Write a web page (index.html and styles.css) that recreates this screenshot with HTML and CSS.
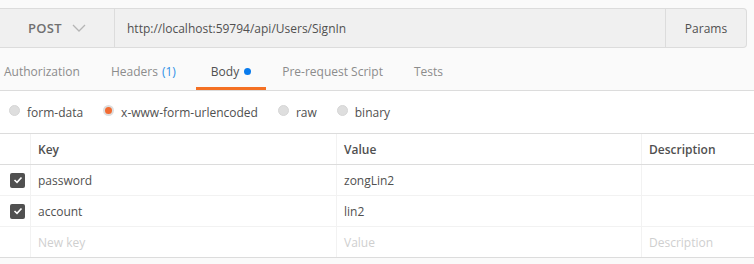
FILE: index.html
```html
<!DOCTYPE html>
<html>
<head>
<meta charset="utf-8">
<link rel="stylesheet" href="styles.css">
</head>
<body>
<div class="urlbar">
  <div class="method">
    <span class="method-name">POST</span>
    <svg class="chev" width="14" height="8" viewBox="0 0 14 8"><path d="M1 1 L7 7 L13 1" fill="none" stroke="#b5b5b5" stroke-width="1.3"/></svg>
  </div>
  <div class="url">http://localhost:59794/api/Users/SignIn</div>
  <div class="params">Params</div>
</div>
<div class="tabs">
  <div class="tab">Authorization</div>
  <div class="tab">Headers <span class="count">(1)</span></div>
  <div class="tab active">Body <span class="dot"></span></div>
  <div class="tab">Pre-request Script</div>
  <div class="tab">Tests</div>
</div>
<div class="body">
  <div class="radios">
    <label class="radio"><span class="circle"></span>form-data</label>
    <label class="radio"><span class="circle on"></span>x-www-form-urlencoded</label>
    <label class="radio"><span class="circle"></span>raw</label>
    <label class="radio"><span class="circle"></span>binary</label>
  </div>
  <div class="table">
    <div class="row head">
      <div class="c chk"></div>
      <div class="c key">Key</div>
      <div class="c val">Value</div>
      <div class="c desc">Description</div>
    </div>
    <div class="row">
      <div class="c chk"><span class="box"><svg width="10" height="8" viewBox="0 0 10 8"><path d="M1.5 4 L4 6.3 L8.5 1.5" fill="none" stroke="#fff" stroke-width="1.6"/></svg></span></div>
      <div class="c key">password</div>
      <div class="c val">zongLin2</div>
      <div class="c desc"></div>
    </div>
    <div class="row">
      <div class="c chk"><span class="box"><svg width="10" height="8" viewBox="0 0 10 8"><path d="M1.5 4 L4 6.3 L8.5 1.5" fill="none" stroke="#fff" stroke-width="1.6"/></svg></span></div>
      <div class="c key">account</div>
      <div class="c val">lin2</div>
      <div class="c desc"></div>
    </div>
    <div class="row last">
      <div class="c chk"></div>
      <div class="c key ph">New key</div>
      <div class="c val ph">Value</div>
      <div class="c desc ph">Description</div>
    </div>
  </div>
</div>
</body>
</html>
```
FILE: styles.css
```css
html, body {
  margin: 0;
  padding: 0;
  background: #fafafa;
  font-family: "Open Sans", "Noto Sans", sans-serif;
  font-size: 12px;
  color: #505050;
  overflow: hidden;
}
.urlbar {
  margin-top: 8px;
  width: 746px;
  height: 38px;
  display: flex;
  background: #f0f0f0;
  border: 1px solid #dcdcdc;
  border-left: none;
  border-radius: 0 4px 4px 0;
}
.method {
  width: 115px;
  flex: none;
  border-right: 1px solid #dcdcdc;
  display: flex;
  align-items: center;
  padding-left: 28px;
  box-sizing: border-box;
}
.method-name {
  font-size: 13px;
  font-weight: 600;
  color: #707070;
  letter-spacing: 0.3px;
}
.chev {
  margin-left: 10px;
}
.url {
  flex: 1;
  display: flex;
  align-items: center;
  padding-left: 12px;
  color: #505050;
}
.params {
  width: 80px;
  flex: none;
  border-left: 1px solid #dcdcdc;
  display: flex;
  align-items: center;
  justify-content: center;
  color: #505050;
}
.tabs {
  display: flex;
  height: 41px;
  margin-top: 1px;
  margin-left: -11px;
  border-bottom: 1px solid #dcdcdc;
}
.tab {
  padding: 0 15px;
  margin-right: 1px;
  display: flex;
  align-items: center;
  color: #8c8c8c;
  box-sizing: border-box;
  border-bottom: 3px solid transparent;
  padding-top: 6px;
}
.tab.active {
  color: #505050;
  border-bottom-color: #f47023;
}
.count {
  color: #2e90e6;
  margin-left: 4px;
  margin-right: 4px;
}
.dot {
  display: inline-block;
  width: 7px;
  height: 7px;
  border-radius: 50%;
  background: #097bed;
  margin-left: 5px;
}
.body {
  background: #fff;
}
.radios {
  display: flex;
  height: 42px;
  align-items: center;
  padding-left: 9px;
}
.radio {
  display: flex;
  align-items: center;
  margin-right: 20px;
  color: #505050;
}
.circle {
  width: 11px;
  height: 11px;
  border-radius: 50%;
  background: #dedede;
  margin-right: 7px;
  box-sizing: border-box;
  border: 1px solid #d6d6d6;
  position: relative;
  top: -2px;
}
.circle.on {
  background: #f26b32;
  border: 2px solid #dedede;
}
.table {
  border-top: 1px solid #dcdcdc;
  border-bottom: 1px solid #dcdcdc;
}
.row {
  display: flex;
  height: 30px;
  border-bottom: 1px solid #f2f2f2;
}
.row.head {
  border-bottom: 1px solid #dcdcdc;
  font-weight: 600;
}
.row.last {
  border-bottom: none;
}
.c {
  display: flex;
  align-items: center;
  box-sizing: border-box;
  padding-left: 7px;
  border-right: 1px solid #f2f2f2;
}
.chk {
  width: 31px;
  padding-left: 10px;
}
.key { width: 306px; }
.val { width: 305px; }
.desc { flex: 1; border-right: none; }
.ph { color: #cfcfcf; }
.box {
  width: 15px;
  height: 15px;
  border-radius: 2px;
  background: #505050;
  display: flex;
  align-items: center;
  justify-content: center;
}
```
